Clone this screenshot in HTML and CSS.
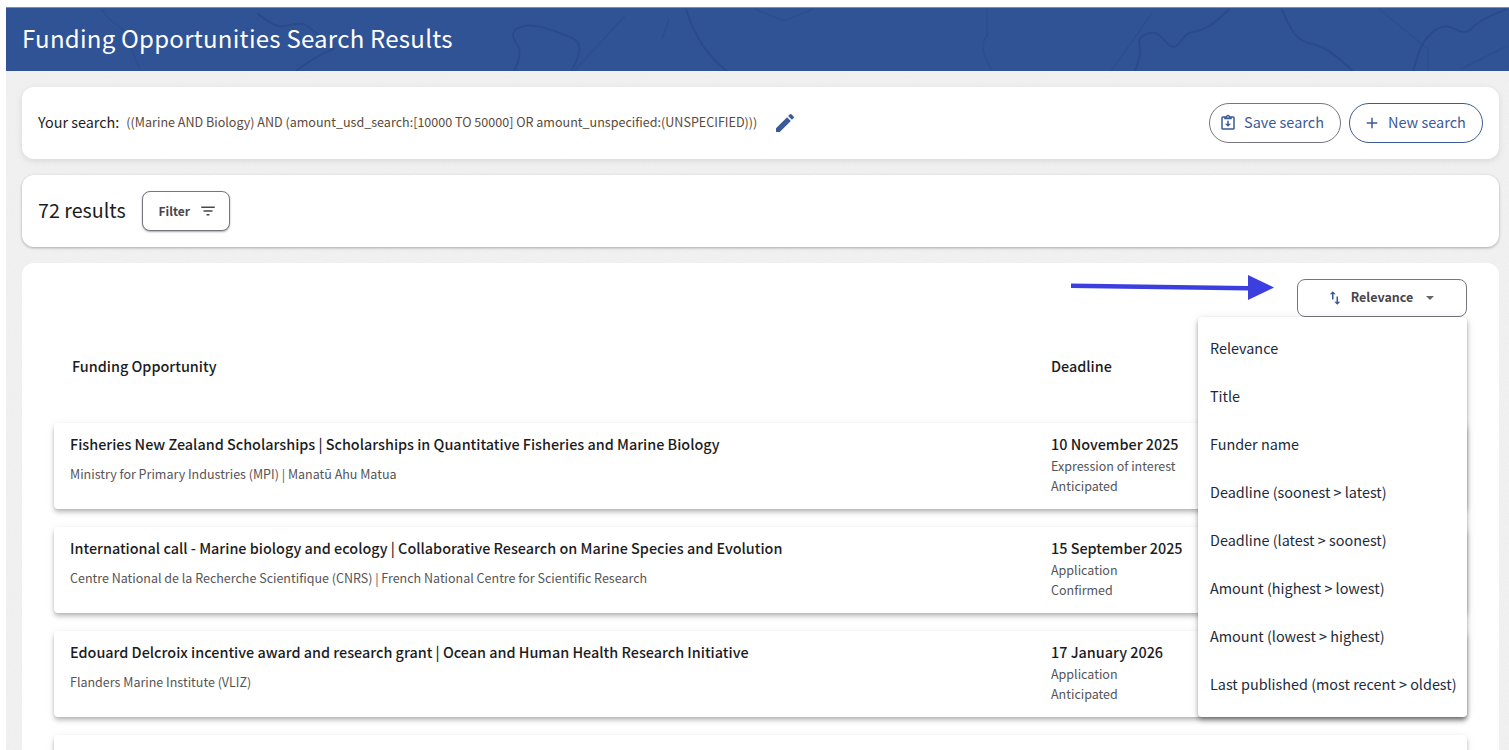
FILE: index.html
```html
<!DOCTYPE html>
<html lang="en">
<head>
<meta charset="utf-8">
<title>Funding Opportunities Search Results</title>
<link rel="stylesheet" href="styles.css">
</head>
<body>
<div class="page">
  <header class="hero">
    <svg class="hero-map" viewBox="0 0 1503 64" aria-hidden="true">
      <g class="map-strong">
        <path d="M1223 1Q1209 15 1201.500 19Q1194 23 1187 24Q1180 25 1174 34Q1168 43 1161.500 35.500Q1155 28 1150.500 25.500Q1146 23 1138.500 27Q1131 31 1133.500 38Q1136 45 1129 63"/>
        <path d="M1276 1Q1281 15 1288 25Q1296 35 1308 36.500Q1320 38 1347 63"/>
        <path d="M1501 1Q1475 11 1467 19Q1460 28 1449 21Q1439 15 1428 23Q1417 31 1412 47Q1407 63 1407 64"/>
        <path d="M251 5Q270 21 280 18Q290 15 297 16Q304 18 328 41Q309 48 290 63"/>
        <path d="M565 63Q580 38 568 31Q556 25 539 20Q522 15 512 20Q503 25 510 35Q518 45 508 63"/>
        <path d="M680 1Q692 41 721 63"/>
      </g>
      <g class="map-faint">
        <path d="M96 1Q101 11 110 16Q118 21 122 31Q125 41 135 63"/>
        <path d="M981 1L981 28Q971 38 986 63"/>
        <path d="M1146 5L1105 63"/>
        <path d="M1373 1L1422 41L1422 63"/>
        <path d="M1501 38L1455 61"/>
        <path d="M749 1L778 13L807 1"/>
        <path d="M619 8L568 63"/>
        <path d="M663 11L656 31"/>
      </g>
    </svg>
    <h1 class="hero-title">Funding Opportunities Search Results</h1>
  </header>

  <main class="content">
    <section class="panel search-panel">
      <div class="search-query">
        <span class="search-label">Your search:</span>
        <span class="search-text">((Marine AND Biology) AND (amount_usd_search:[10000 TO 50000] OR amount_unspecified:(UNSPECIFIED)))</span>
        <svg class="edit-icon" viewBox="0 0 24 24" aria-hidden="true"><path d="M3 17.250V21h3.750L17.810 9.940l-3.750-3.750L3 17.250zM20.710 7.040a1 1 0 0 0 0-1.410l-2.340-2.340a1 1 0 0 0-1.410 0l-1.830 1.830 3.750 3.750 1.830-1.830z"/></svg>
      </div>
      <div class="search-actions">
        <button class="pill pill-muted">
          <svg class="pill-icon" viewBox="0 0 24 24" aria-hidden="true"><path d="M19 3h-4.180A3 3 0 0 0 12 1a3 3 0 0 0-2.820 2H5a2 2 0 0 0-2 2v14a2 2 0 0 0 2 2h14a2 2 0 0 0 2-2V5a2 2 0 0 0-2-2zm-7 0a1 1 0 1 1 0 2 1 1 0 0 1 0-2zm7 16H5V5h2v2h10V5h2v14zM13 9h-2v4H8l4 4 4-4h-3V9z"/></svg>
          <span class="btn-label">Save search</span>
        </button>
        <button class="pill pill-blue">
          <svg class="pill-icon" viewBox="0 0 24 24" aria-hidden="true"><path d="M19 13h-6v6h-2v-6H5v-2h6V5h2v6h6v2z"/></svg>
          <span class="btn-label">New search</span>
        </button>
      </div>
    </section>

    <section class="panel count-panel">
      <span class="count">72 results</span>
      <button class="filter-btn"><span class="filter-label">Filter</span>
        <svg class="filter-icon" viewBox="0 0 24 24" aria-hidden="true"><path d="M10 18h4v-2h-4v2zM3 6v2h18V6H3zm3 7h12v-2H6v2z"/></svg>
      </button>
    </section>

    <section class="panel results-panel">
      <div class="sort-row">
        <svg class="arrow" viewBox="0 0 204 26" aria-hidden="true"><path d="M0 8.500l177 2.500V0l26 12.500L177 25V15.500L0 13z"/></svg>
        <button class="sort-btn">
          <svg class="sort-icon" viewBox="0 0 24 24" aria-hidden="true"><path d="M16 17.010V10h-2v7.010h-3L15 21l4-3.990h-3zM9 3L5 6.990h3V14h2V6.990h3L9 3z"/></svg>
          <span class="btn-label">Relevance</span>
          <span class="caret"></span>
        </button>
      </div>

      <div class="table-head">
        <span>Funding Opportunity</span>
        <span>Deadline</span>
      </div>

      <article class="result">
        <div>
          <h2 class="result-title">Fisheries New Zealand Scholarships | Scholarships in Quantitative Fisheries and Marine Biology</h2>
          <p class="result-funder">Ministry for Primary Industries (MPI) | Manatū Ahu Matua</p>
        </div>
        <div>
          <div class="date">10 November 2025</div>
          <div class="meta">Expression of interest</div>
          <div class="meta">Anticipated</div>
        </div>
      </article>
      <article class="result">
        <div>
          <h2 class="result-title">International call - Marine biology and ecology | Collaborative Research on Marine Species and Evolution</h2>
          <p class="result-funder">Centre National de la Recherche Scientifique (CNRS) | French National Centre for Scientific Research</p>
        </div>
        <div>
          <div class="date">15 September 2025</div>
          <div class="meta">Application</div>
          <div class="meta">Confirmed</div>
        </div>
      </article>
      <article class="result">
        <div>
          <h2 class="result-title">Edouard Delcroix incentive award and research grant | Ocean and Human Health Research Initiative</h2>
          <p class="result-funder">Flanders Marine Institute (VLIZ)</p>
        </div>
        <div>
          <div class="date">17 January 2026</div>
          <div class="meta">Application</div>
          <div class="meta">Anticipated</div>
        </div>
      </article>
      <article class="result"></article>

      <ul class="sort-menu">
        <li>Relevance</li>
        <li>Title</li>
        <li>Funder name</li>
        <li>Deadline (soonest &gt; latest)</li>
        <li>Deadline (latest &gt; soonest)</li>
        <li>Amount (highest &gt; lowest)</li>
        <li>Amount (lowest &gt; highest)</li>
        <li>Last published (most recent &gt; oldest)</li>
      </ul>
    </section>
  </main>
</div>
</body>
</html>
```

FILE: styles.css
```css
* { box-sizing: border-box; }

html, body {
  margin: 0;
  height: 750px;
  overflow: hidden;
  background: #fff;
}

body {
  font-family: "Noto Sans CJK SC", "Noto Sans CJK JP", "Open Sans", sans-serif;
  color: #1c1c1e;
}

.page {
  margin: 7px 0 0 6px;
  height: 743px;
  background-color: #eeeeee;
  background-image: url("data:image/svg+xml,%3Csvg xmlns='http://www.w3.org/2000/svg' width='200' height='200'%3E%3Cfilter id='n'%3E%3CfeTurbulence type='fractalNoise' baseFrequency='.8' numOctaves='2'/%3E%3CfeColorMatrix values='0 0 0 0 1 0 0 0 0 1 0 0 0 0 1 0 0 0 .4 -.1'/%3E%3C/filter%3E%3Crect width='200' height='200' filter='url(%23n)'/%3E%3C/svg%3E");
}

.hero {
  position: relative;
  height: 64px;
  padding: 0 16px;
  display: flex;
  align-items: center;
  background: #305395;
  border-top: 1px solid #7390c2;
  overflow: hidden;
}

.hero-map {
  position: absolute;
  left: 0;
  top: 0;
  width: 1503px;
  height: 64px;
}

.map-strong path {
  fill: none;
  stroke: #2a4a8a;
  stroke-width: 1.800;
  stroke-linejoin: round;
}

.map-faint path {
  fill: none;
  stroke: #2c4d8e;
  stroke-width: 1.200;
  stroke-linejoin: round;
}

.hero-title {
  position: relative;
  margin: 0;
  padding-bottom: 3px;
  font-size: 24px;
  line-height: 32px;
  letter-spacing: .25px;
  font-weight: 400;
  color: #fff;
}

.content {
  padding: 16px 10px 0 16px;
  display: flex;
  flex-direction: column;
  gap: 16px;
}

.panel {
  background: #fff;
  border-radius: 12px;
  box-shadow: 0 1px 3px rgba(0, 0, 0, .3);
}

.search-panel {
  height: 72px;
  padding: 0 16px;
  display: flex;
  align-items: center;
  justify-content: space-between;
  box-shadow: 0 2px 6px rgba(0, 0, 0, .1);
}

.search-query {
  display: flex;
  align-items: center;
}

.search-label {
  padding-bottom: 2px;
  margin-right: 7px;
  font-size: 14.400px;
  line-height: 20px;
}

.search-text {
  padding-bottom: 2px;
  font-size: 12.550px;
  line-height: 20px;
  color: #5a4a3c;
}

.edit-icon {
  width: 24px;
  height: 24px;
  margin-left: 16px;
  fill: #3c5a97;
}

.search-actions {
  display: flex;
  gap: 8px;
}

.btn-label {
  padding-bottom: 3px;
}

.filter-label {
  padding-bottom: 1px;
}

.pill {
  height: 40px;
  border-radius: 20px;
  background: #fff;
  display: flex;
  align-items: center;
  font-family: inherit;
  font-size: 14.500px;
  color: #3c5a97;
  padding: 0;
}

.pill-muted {
  width: 132px;
  border: 1px solid #79757f;
  padding-left: 9px;
  gap: 7px;
}

.pill-blue {
  width: 134px;
  border: 1px solid #3c5a97;
  padding-left: 13px;
  gap: 7px;
}

.pill-icon {
  width: 18px;
  height: 18px;
  fill: #3c5a97;
}

.count-panel {
  height: 72px;
  padding: 0 16px;
  display: flex;
  align-items: center;
  gap: 16px;
}

.count {
  padding-bottom: 2px;
  font-size: 19.700px;
  line-height: 28px;
}

.filter-btn {
  width: 88px;
  height: 40px;
  border: 1px solid #79757f;
  border-radius: 8px;
  background: #fff;
  box-shadow: 0 1px 2px rgba(0, 0, 0, .35);
  font-family: inherit;
  font-size: 12px;
  font-weight: 700;
  color: #48464c;
  display: flex;
  align-items: center;
  justify-content: center;
  gap: 9px;
  padding: 0 0 0 4px;
}

.filter-icon {
  width: 18px;
  height: 18px;
  fill: #48464c;
}

.results-panel {
  position: relative;
  height: 700px;
  padding: 16px 32px 0;
  box-shadow: none;
}

.sort-row {
  display: flex;
  justify-content: flex-end;
  align-items: flex-start;
  height: 38px;
}

.arrow {
  position: absolute;
  left: 1049px;
  top: 12px;
  width: 204px;
  height: 26px;
  fill: #3b3fe0;
}

.sort-btn {
  width: 170px;
  height: 38px;
  border: 1px solid #79757f;
  border-radius: 8px;
  background: #fff;
  font-family: inherit;
  font-size: 12.500px;
  font-weight: 700;
  color: #48464c;
  display: flex;
  align-items: center;
  justify-content: center;
  padding: 0 4px 0 0;
}

.sort-icon {
  width: 18px;
  height: 18px;
  fill: #3c5a97;
  margin-right: 7px;
}

.caret {
  margin-left: 13px;
  border-left: 4px solid transparent;
  border-right: 4px solid transparent;
  border-top: 4px solid #66646b;
}

.table-head {
  display: grid;
  grid-template-columns: 979px 1fr;
  height: 106px;
  padding: 37px 0 0 18px;
  font-size: 14.400px;
  line-height: 24px;
  font-weight: 500;
}

.result {
  display: grid;
  grid-template-columns: 981px 1fr;
  height: 86px;
  margin-bottom: 18px;
  padding: 11px 16px 0;
  background: #fff;
  border-radius: 4px;
  box-shadow: 0 2px 4px -1px rgba(0, 0, 0, .2), 0 4px 5px rgba(0, 0, 0, .14), 0 1px 10px rgba(0, 0, 0, .06);
}

.result-title {
  margin: 0;
  font-size: 14.400px;
  line-height: 20px;
  font-weight: 500;
}

.result-funder {
  margin: 10px 0 0;
  font-size: 12.500px;
  line-height: 20px;
  color: #555458;
}

.date {
  margin-bottom: 2px;
  font-size: 14.400px;
  line-height: 20px;
  font-weight: 500;
}

.meta {
  font-size: 12.500px;
  line-height: 20px;
  color: #555458;
}

.sort-menu {
  position: absolute;
  left: 1176px;
  top: 54px;
  width: 269px;
  height: 400px;
  margin: 0;
  padding: 8px 0;
  list-style: none;
  background: #fff;
  border-radius: 4px;
  box-shadow: 0 2px 4px -1px rgba(0, 0, 0, .3), 0 4px 5px rgba(0, 0, 0, .16), 0 1px 10px rgba(0, 0, 0, .1);
}

.sort-menu li {
  height: 48px;
  padding: 0 12px 4px;
  display: flex;
  align-items: center;
  font-size: 14.400px;
  color: #1c2b3c;
  white-space: nowrap;
}
```
